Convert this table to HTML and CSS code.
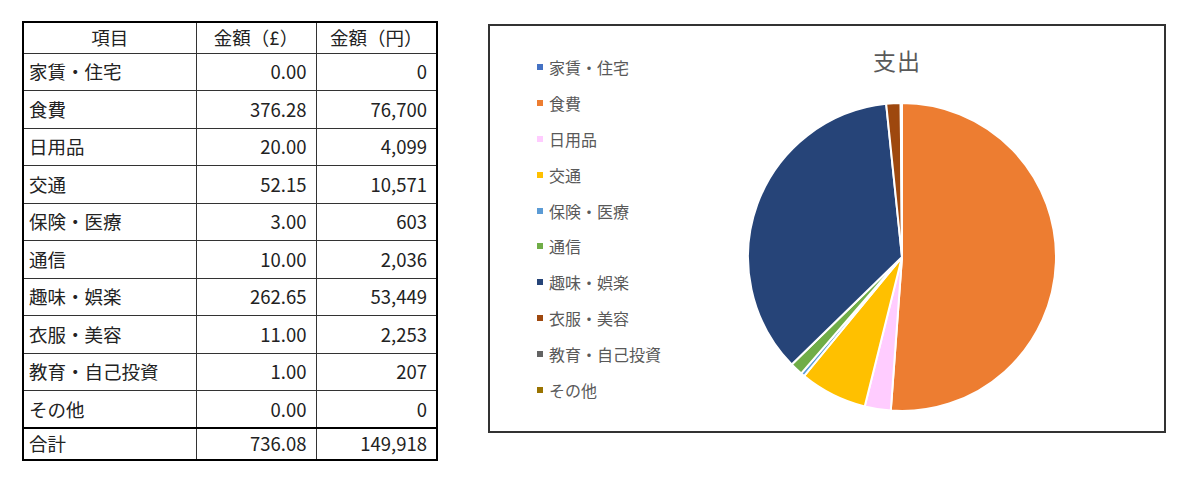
FILE: index.html
```html
<!DOCTYPE html>
<html lang="ja">
<head>
<meta charset="utf-8">
<title>支出</title>
<link rel="stylesheet" href="styles.css">
</head>
<body>
<div class="page">
  <table class="budget">
    <colgroup><col class="c1"><col class="c2"><col class="c3"></colgroup>
    <thead>
      <tr><th>項目</th><th>金額（£）</th><th>金額（円）</th></tr>
    </thead>
    <tbody>
      <tr><td>家賃・住宅</td><td class="num">0.00</td><td class="num">0</td></tr>
      <tr><td>食費</td><td class="num">376.28</td><td class="num">76,700</td></tr>
      <tr><td>日用品</td><td class="num">20.00</td><td class="num">4,099</td></tr>
      <tr><td>交通</td><td class="num">52.15</td><td class="num">10,571</td></tr>
      <tr><td>保険・医療</td><td class="num">3.00</td><td class="num">603</td></tr>
      <tr><td>通信</td><td class="num">10.00</td><td class="num">2,036</td></tr>
      <tr><td>趣味・娯楽</td><td class="num">262.65</td><td class="num">53,449</td></tr>
      <tr><td>衣服・美容</td><td class="num">11.00</td><td class="num">2,253</td></tr>
      <tr><td>教育・自己投資</td><td class="num">1.00</td><td class="num">207</td></tr>
      <tr><td>その他</td><td class="num">0.00</td><td class="num">0</td></tr>
    </tbody>
    <tfoot>
      <tr><td>合計</td><td class="num">736.08</td><td class="num">149,918</td></tr>
    </tfoot>
  </table>

  <div class="chart">
    <ul class="legend">
      <li><span class="mk k1"></span>家賃・住宅</li>
      <li><span class="mk k2"></span>食費</li>
      <li><span class="mk k3"></span>日用品</li>
      <li><span class="mk k4"></span>交通</li>
      <li><span class="mk k5"></span>保険・医療</li>
      <li><span class="mk k6"></span>通信</li>
      <li><span class="mk k7"></span>趣味・娯楽</li>
      <li><span class="mk k8"></span>衣服・美容</li>
      <li><span class="mk k9"></span>教育・自己投資</li>
      <li><span class="mk k10"></span>その他</li>
    </ul>
    <div class="plot">
      <div class="title">支出</div>
      <svg class="pie" width="320" height="320" viewBox="-160 -160 320 320">
        <g stroke="#ffffff" stroke-width="2" stroke-linejoin="round">
          <path fill="#ED7D31" d="M0 0 L0 -154 A154 154 0 1 1 -11.23 153.59 Z"/>
          <path fill="#FFCCFF" d="M0 0 L-11.23 153.59 A154 154 0 0 1 -37.31 149.41 Z"/>
          <path fill="#FFC000" d="M0 0 L-37.31 149.41 A154 154 0 0 1 -97.77 118.98 Z"/>
          <path fill="#5B9BD5" d="M0 0 L-97.77 118.98 A154 154 0 0 1 -100.75 116.47 Z"/>
          <path fill="#70AD47" d="M0 0 L-100.75 116.47 A154 154 0 0 1 -110.31 107.46 Z"/>
          <path fill="#264478" d="M0 0 L-110.31 107.46 A154 154 0 0 1 -15.83 -153.18 Z"/>
          <path fill="#9E480E" d="M0 0 L-15.83 -153.18 A154 154 0 0 1 -1.32 -153.99 Z"/>
          <path fill="#636363" d="M0 0 L-1.32 -153.99 A154 154 0 0 1 0 -154 Z"/>
        </g>
      </svg>
    </div>
  </div>
</div>
</body>
</html>
```

FILE: styles.css
```css
html, body {
  margin: 0;
  padding: 0;
  background: #ffffff;
}

.page {
  display: flex;
  align-items: flex-start;
  gap: 50px;
  padding: 21px 0 0 22px;
  font-family: "Noto Sans CJK JP", "Noto Sans", sans-serif;
}

/* ---------- table ---------- */
.budget {
  border-collapse: collapse;
  border: 2px solid #000;
  table-layout: fixed;
  width: 414px;
  font-size: 18.5px;
  color: #222;
}
.budget .c1 { width: 173px; }
.budget .c2 { width: 120px; }
.budget .c3 { width: 121px; }

.budget th,
.budget td {
  border: 1px solid #333;
  padding: 0 5px;
  line-height: 22px;
  font-weight: 400;
  white-space: nowrap;
}
.budget thead tr { height: 31px; }
.budget th {
  text-align: center;
  padding-bottom: 2px;
}
.budget tbody tr { height: 37.5px; }
.budget tbody td { padding-bottom: 1px; }
.budget tfoot tr { height: 32px; }
.budget tfoot td {
  border-top: 2px solid #000;
  padding-bottom: 3px;
}
.budget td.num {
  text-align: right;
  padding-right: 9px;
}

/* ---------- chart ---------- */
.chart {
  margin-top: 3px;
  width: 674px;
  height: 405px;
  border: 2px solid #333;
  display: grid;
  grid-template-columns: 252px 320px;
  align-items: start;
  box-sizing: content-box;
}

.legend {
  list-style: none;
  margin: 0;
  padding: 23px 0 0 47px;
  font-size: 16px;
  color: #595959;
}
.legend li {
  display: flex;
  align-items: center;
  height: 35.9px;
  white-space: nowrap;
}
.mk {
  width: 6px;
  height: 6px;
  margin-right: 6px;
  flex: none;
}
.k1 { background: #4472C4; }
.k2 { background: #ED7D31; }
.k3 { background: #FFCCFF; }
.k4 { background: #FFC000; }
.k5 { background: #5B9BD5; }
.k6 { background: #70AD47; }
.k7 { background: #264478; }
.k8 { background: #9E480E; }
.k9 { background: #636363; }
.k10 { background: #997300; }

.plot {
  display: flex;
  flex-direction: column;
  align-items: center;
  padding-top: 19px;
}
.title {
  font-size: 23px;
  line-height: 30px;
  color: #595959;
  padding-right: 10px;
  letter-spacing: 1px;
}
.pie {
  display: block;
  margin-top: 22px;
}
```
